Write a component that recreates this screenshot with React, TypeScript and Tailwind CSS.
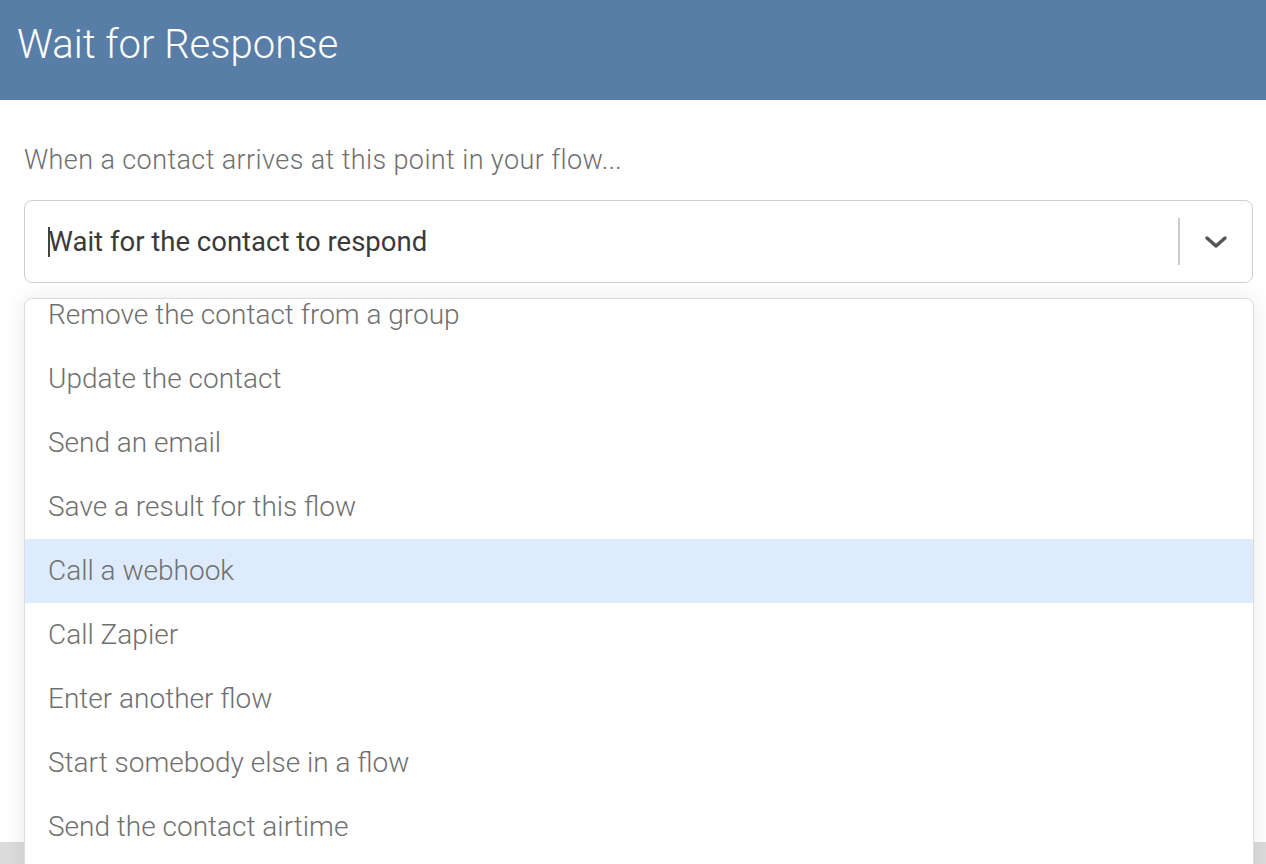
import { useState } from 'react';

const options = [
  'Remove the contact from a group',
  'Update the contact',
  'Send an email',
  'Save a result for this flow',
  'Call a webhook',
  'Call Zapier',
  'Enter another flow',
  'Start somebody else in a flow',
  'Send the contact airtime',
];

const App = () => {
  const [hovered, setHovered] = useState('Call a webhook');

  return (
    <div
      className="relative w-full h-[864px] overflow-hidden bg-white flex flex-col"
      style={{ fontFamily: 'Roboto, "Noto Sans", sans-serif' }}
    >
      {/* Header */}
      <header className="h-[100px] shrink-0 bg-[#587ea8] flex items-center px-[17px] pb-[10px]">
        <h1 className="text-white text-[40px] font-light leading-none">Wait for Response</h1>
      </header>

      {/* Body */}
      <main className="flex-1 pl-6 pr-[13px] pt-[42px]">
        <p className="text-[27px] font-light tracking-[0.4px] text-[#6f6f6f] leading-[36px]">
          When a contact arrives at this point in your flow...
        </p>
        <div className="mt-[22px] h-[83px] border border-[#cfcfcf] rounded-[8px] flex items-center">
          <div className="flex-1 flex items-center pl-[23px] pt-[1px]">
            <span className="w-[1.5px] h-[30px] bg-[#444] -mr-[1px]" />
            <span className="text-[27.5px] text-[#3a3a3a] font-normal">Wait for the contact to respond</span>
          </div>
          <div className="w-[2px] h-[47px] bg-[#cccccc]" />
          <div className="w-[72px] flex items-center justify-center">
            <svg width="24" height="16" viewBox="0 0 24 16" fill="none">
              <polyline points="3,4 12,12 21,4" stroke="#555" strokeWidth="3.5" strokeLinecap="round" strokeLinejoin="round" />
            </svg>
          </div>
        </div>
      </main>

      {/* Footer strip */}
      <footer className="h-[22px] shrink-0 bg-[#dcdcdc]" />

      {/* Open menu */}
      <div className="absolute left-6 right-[12px] top-[298px] h-[600px] bg-white border border-[#dcdcdc] rounded-[8px] shadow-[0_0_22px_rgba(0,0,0,0.09)] overflow-hidden">
        <ul className="-mt-[16px]">
          {options.map((o) => (
            <li
              key={o}
              onMouseEnter={() => setHovered(o)}
              className={`h-[64px] flex items-center pl-[23px] text-[28px] font-light text-[#707070] ${
                hovered === o ? 'bg-[#deebfc]' : ''
              }`}
            >
              {o}
            </li>
          ))}
        </ul>
      </div>
    </div>
  );
};

export default App;
